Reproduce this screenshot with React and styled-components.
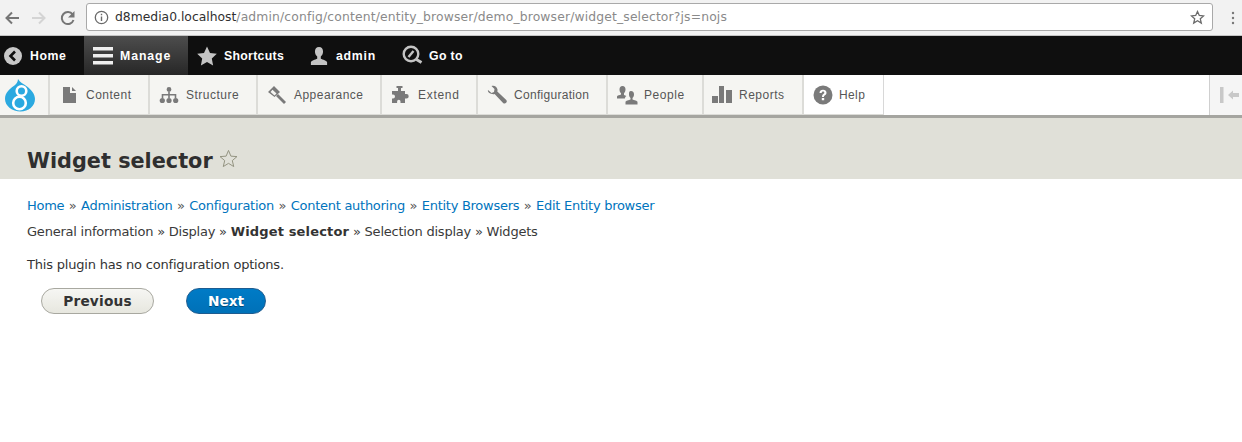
import React from "react";
import styled, { createGlobalStyle } from "styled-components";

const Global = createGlobalStyle`
  html, body { margin: 0; padding: 0; background: #fff; }
  body { font-family: "DejaVu Sans", sans-serif; color: #333; width: 1242px; height: 442px; overflow: hidden; }
`;

const Browser = styled.div`
  height: 36px; box-sizing: border-box; background: #f2f2f2; border-bottom: 1px solid #c4c4c4;
  display: flex; align-items: flex-start;
`;
const NavIcons = styled.div`
  width: 86px; height: 35px; flex: none; display: flex; align-items: center; padding-left: 2px; gap: 10px; box-sizing: border-box;
`;
const Address = styled.div`
  margin-top: 3px; width: 1127px; height: 28px; box-sizing: border-box; flex: none;
  background: #fff; border: 1px solid #a9a9a9; border-radius: 3px;
  display: flex; align-items: center; padding: 0 7px 0 7px;
  font-size: 12.35px; white-space: nowrap;
`;
const Host = styled.span` color: #303030; margin-left: 6px; `;
const UrlPath = styled.span` color: #8a8a8a; flex: 1; letter-spacing: .15px; `;
const Kebab = styled.div`
  flex: 1; height: 35px; display: flex; align-items: center; justify-content: center; padding-left: 10px;
`;

const TopBar = styled.div`
  height: 39px; background: #0f0f0f; display: flex; align-items: stretch; padding-left: 4px;
`;
const TopItem = styled.div`
  display: flex; align-items: center; box-sizing: border-box;
  width: ${p => p.$w}px; padding-left: ${p => p.$pl || 0}px; gap: ${p => p.$gap || 8}px;
  color: #fff; font: bold 12.3px "Liberation Sans", sans-serif; letter-spacing: ${p => p.$ls}px;
  background: ${p => p.$active ? "linear-gradient(#4d4d4d, #272727)" : "none"};
`;

const Tray = styled.div`
  height: 43px; box-sizing: border-box; background: #fff; display: flex; align-items: stretch;
  border-bottom: 3px solid #a5a5a0;
`;
const LogoCell = styled.div`
  width: 50px; flex: none; box-sizing: border-box; background: #f5f5f2; border-right: 2px solid #dcdcd8;
  display: flex; align-items: center; padding-left: 5px;
`;
const Tab = styled.div`
  width: ${p => p.$w}px; flex: none; box-sizing: border-box;
  background: ${p => p.$white ? "#fff" : "#f5f5f2"};
  border-right: ${p => p.$white ? "1px solid #d8d8d8" : "2px solid #dcdcd8"};
  border-bottom: 1px solid #dcdcd8;
  display: flex; align-items: center; padding-left: ${p => p.$pl}px; gap: ${p => p.$gap}px;
  font: 12px "Liberation Sans", sans-serif; letter-spacing: ${p => p.$ls}px; color: #565656;
`;
const Spacer = styled.div` flex: 1; `;
const Toggle = styled.div`
  width: 33px; flex: none; box-sizing: border-box; background: #f5f5f5; border-left: 1px solid #cfcfcf;
  display: flex; align-items: center; padding-left: 10px;
`;

const Header = styled.div`
  height: 61px; background: #e0e0d8; box-sizing: border-box; padding: 29px 0 0 27px;
  display: flex; align-items: flex-start; gap: 6px;
`;
const Title = styled.h1`
  margin: 0; font: bold 20.8px/28px "DejaVu Sans", sans-serif; color: #2f2f2f;
`;
const StarWrap = styled.div` padding-top: 2px; `;
const Main = styled.div` padding: 18px 0 0 27px; font-size: 13px; `;
const Crumbs = styled.div` line-height: 17px; color: #555; white-space: nowrap; letter-spacing: -.27px; `;
const Sep = styled.span` margin: 0 .7px; `;
const A = styled.a` color: #0074bd; text-decoration: none; `;
const Steps = styled.div` margin-top: 9px; line-height: 17px; color: #3a3a3a; white-space: nowrap; letter-spacing: -.22px; b { color: #333; letter-spacing: .15px; } `;
const Note = styled.div` margin-top: 16px; line-height: 17px; color: #333; letter-spacing: -.195px; `;
const Buttons = styled.div` display: flex; margin: 15px 0 0 14px; gap: 32px; `;
const Button = styled.div`
  height: 26px; box-sizing: border-box; width: ${p => p.$w}px; border-radius: 13px;
  display: flex; align-items: center; justify-content: center;
  font: bold 13.7px "DejaVu Sans", sans-serif;
  letter-spacing: ${p => p.$primary ? 0 : .2}px;
  border: 1px solid ${p => p.$primary ? "#1e5c90" : "#a8a8a0"};
  color: ${p => p.$primary ? "#fff" : "#333"};
  background: ${p => p.$primary ? "linear-gradient(#007bc6, #0071b8)" : "linear-gradient(#f6f6f3, #e7e7df)"};
  text-shadow: ${p => p.$primary ? "0 1px 0 rgba(0,0,0,.4)" : "none"};
`;

const Ic = ({ s = 20, w, h, vb = "0 0 20 20", children }) => (
  <svg width={w || s} height={h || s} viewBox={vb} style={{ flex: "none", display: "block" }}>{children}</svg>
);
const G = "#7a7a7a";

const tabs = [
  { l: "Content", w: 100, pl: 12, gap: 8, ls: .5, i: <Ic w={16} h={18} vb="0 0 16 18"><path d="M1 1h7v6h6v10H1z M10 1l4 4h-4z" fill={G}/></Ic> },
  { l: "Structure", w: 108, pl: 9, gap: 7, ls: .5, i: <Ic w={20} h={18} vb="0 0 20 18"><path d="M10 1a2.4 2.4 0 1 1 0 4.800a2.400 2.400 0 1 1 0-4.800z M9.200 5h1.600v3h6.500v4h-1.600V9.600h-4.900V12H9.200V9.600H4.300V12H2.700V8h6.500z" fill={G}/><circle cx="3.300" cy="14.500" r="2.600" fill={G}/><circle cx="10" cy="14.500" r="2.600" fill={G}/><circle cx="16.700" cy="14.500" r="2.600" fill={G}/></Ic> },
  { l: "Appearance", w: 124, pl: 9, gap: 7, ls: .47, i: <Ic w={20} h={20} vb="0 0 20 20"><path d="M7 1l6 6-5.500 5L1 7z M5.500 4.800L3.500 7l4 3.500 2-2z" fill={G} fillRule="evenodd"/><path d="M11 9l8 8-2 2-8-8z" fill={G}/></Ic> },
  { l: "Extend", w: 96, pl: 9, gap: 7, ls: .7, i: <Ic w={20} h={18} vb="0 0 20 18"><path d="M5.500 0h6v2H10v3h4v3h1.500a2.200 2.200 0 1 1 0 4.400H14V17h-4.500v-1.500a1.700 1.700 0 0 0-3.400 0V17H1v-4.500h1a2 2 0 1 0 0-4H1V5h6V2H5.500z" fill={G}/></Ic> },
  { l: "Configuration", w: 130, pl: 9, gap: 7, ls: .3, i: <Ic w={20} h={20} vb="0 0 20 20"><path d="M1 5l3.500 3L7 7l.5-3L4.500 1C7 0 10 1.500 10.500 4.500c.1.800 0 1.400-.2 2l9 8.500c.8 1 .6 2-.2 2.800s-2 1-3 .1l-8.500-9c-.8.300-1.600.4-2.500.2C2 8 .5 7 1 5z" fill={G}/></Ic> },
  { l: "People", w: 96, pl: 9, gap: 6, ls: .55, i: <Ic w={21} h={20} vb="0 0 21 20"><path d="M5.500 1c2 0 3 1.500 3 3.500 0 1.500-.7 3-1.500 3.700V10c.8.500 1.700.7 2.400 1-1 .8-1.500 1.500-1.500 2.500H0v-2c0-1 3-1.500 4-2V8.200C3 7.500 2.500 6 2.500 4.500 2.500 2.500 3.500 1 5.500 1z" fill={G}/><path d="M14 6c2 0 3 1.500 3 3.500 0 1.500-.6 2.700-1.500 3.500v1.500c1.500.7 5 1.200 5 2.500v2.500H8.500V17c0-1.300 3.500-1.800 5-2.500V13c-.9-.8-1.500-2-1.500-3.500C12 7.500 12 6 14 6z" fill={G}/></Ic> },
  { l: "Reports", w: 100, pl: 8, gap: 7, ls: .5, i: <Ic w={20} h={20} vb="0 0 20 20"><path d="M0 11h6v7H0z M7 1h5v17H7z M14 5h6v13h-6z" fill={G}/></Ic> },
];

const Crumb = ["Home", "Administration", "Configuration", "Content authoring", "Entity Browsers", "Edit Entity browser"];

export default function App() {
  return (
    <>
      <Global />
      <Browser>
        <NavIcons>
          <Ic s={18} vb="0 0 18 18"><path d="M17 9H5M10 3.500L4.500 9l5.500 5.500" fill="none" stroke="#767676" strokeWidth="2"/></Ic>
          <Ic s={18} vb="0 0 18 18"><path d="M2 9h12.500M9 3.500L14.500 9 9 14.500" fill="none" stroke="#d4d4d4" strokeWidth="2"/></Ic>
          <Ic s={18} vb="0 0 18 18"><path d="M15.500 11a6 6 0 1 1-.8-5.400" fill="none" stroke="#767676" strokeWidth="2"/><path d="M16.500 2v6.500h-6.500z" fill="#767676"/></Ic>
        </NavIcons>
        <Address>
          <Ic s={15} vb="0 0 15 15"><circle cx="7.500" cy="7.500" r="6.200" fill="none" stroke="#6a6a6a" strokeWidth="1.300"/><path d="M6.800 6.500h1.400v4.500H6.800z M6.800 3.800h1.400v1.400H6.800z" fill="#6a6a6a"/></Ic>
          <Host>d8media0.localhost</Host>
          <UrlPath>/admin/config/content/entity_browser/demo_browser/widget_selector?js=nojs</UrlPath>
          <Ic s={15} vb="0 0 15 15"><path d="M7.500 1.500l1.800 4 4.300.4-3.300 2.900 1 4.300-3.800-2.300-3.800 2.300 1-4.300L1.400 5.900l4.300-.4z" fill="none" stroke="#6a6a6a" strokeWidth="1.300"/></Ic>
        </Address>
        <Kebab>
          <Ic w={4} h={14} vb="0 0 4 14"><circle cx="2" cy="2" r="1.200" fill="#777"/><circle cx="2" cy="7" r="1.200" fill="#777"/><circle cx="2" cy="12" r="1.200" fill="#777"/></Ic>
        </Kebab>
      </Browser>

      <TopBar>
        <TopItem $w={80} $gap={8} $ls={.55}>
          <Ic s={18} vb="0 0 18 18"><circle cx="9" cy="9" r="9" fill="#c8c8c8"/><path d="M11 4.500L6.500 9l4.500 4.500" fill="none" stroke="#0f0f0f" strokeWidth="2.600"/></Ic>
          Home
        </TopItem>
        <TopItem $w={104} $active $pl={9} $gap={7} $ls={.9}>
          <Ic w={20} h={19} vb="0 0 20 19"><path d="M0 1h20v3.400H0z M0 8h20v3.400H0z M0 15h20v3.400H0z" fill="#eee"/></Ic>
          Manage
        </TopItem>
        <TopItem $w={113} $pl={9} $gap={7} $ls={.3}>
          <Ic s={20} vb="0 0 20 20"><path d="M10 .5l3 6.500 6.800.8-5 4.700 1.300 6.900-6.100-3.400-6.100 3.400 1.300-6.900-5-4.700L7 7z" fill="#c4c4c4"/></Ic>
          Shortcuts
        </TopItem>
        <TopItem $w={90} $pl={9} $gap={8} $ls={.75}>
          <Ic w={18} h={20} vb="0 0 20 20"><path d="M10 0c3 0 4.500 2.300 4.500 5 0 2.300-1 4.500-2.500 5.500V13c2 1 7 2 7 4v3H1v-3c0-2 5-3 7-4v-2.500C6.500 9.500 5.500 7.300 5.500 5 5.500 2.300 7 0 10 0z" fill="#c4c4c4"/></Ic>
          admin
        </TopItem>
        <TopItem $w={100} $pl={11} $gap={6} $ls={.35}>
          <Ic s={21} vb="0 0 21 21"><circle cx="9" cy="9" r="7.300" fill="none" stroke="#c4c4c4" strokeWidth="2.400"/><path d="M6.500 12L11.500 6" stroke="#c4c4c4" strokeWidth="2.400"/><path d="M14.500 14.500l5 3" stroke="#c4c4c4" strokeWidth="3"/></Ic>
          Go to
        </TopItem>
      </TopBar>

      <Tray>
        <LogoCell>
          <Ic w={31} h={34} vb="0 0 31 34">
            <path d="M13 1c2 3.500 5 4.500 9 7.500 4.500 3.500 8 7.500 8 12.500 0 7-6.500 12.500-14.500 12.500S0 28 0 21c0-6 4.500-10 8-12.500C11 6.500 13 4.500 13 1z" fill="#2ba9e0"/>
            <circle cx="16.500" cy="13" r="4.800" fill="#2ba9e0" stroke="#fff" strokeWidth="2.600"/>
            <circle cx="14.500" cy="25" r="6.300" fill="#2ba9e0" stroke="#fff" strokeWidth="2.600"/>
          </Ic>
        </LogoCell>
        {tabs.map(t => (
          <Tab key={t.l} $w={t.w} $pl={t.pl} $gap={t.gap} $ls={t.ls}>{t.i}{t.l}</Tab>
        ))}
        <Tab $w={80} $pl={9} $gap={6} $ls={.38} $white>
          <Ic s={20} vb="0 0 20 20"><circle cx="10" cy="10" r="9.500" fill={G}/><path d="M6.500 8c0-2 1.500-3.200 3.500-3.200S13.500 6 13.500 7.800c0 2.400-2.500 2.400-2.500 4.200H9c0-3 2.300-3 2.300-4.200 0-.7-.5-1.200-1.300-1.200S8.700 7.200 8.700 8z M8.800 13h2.400v2.300H8.800z" fill="#fff"/></Ic>
          Help
        </Tab>
        <Spacer />
        <Toggle>
          <Ic w={20} h={16} vb="0 0 20 16"><path d="M0 0h3.500v16H0z M8 8l5-4.500V6h6v4h-6v2.500z" fill="#c8c8c8"/></Ic>
        </Toggle>
      </Tray>

      <Header>
        <Title>Widget selector</Title>
        <StarWrap>
          <Ic s={19} vb="0 0 20 20"><path d="M10 1.500l2.500 6 6.400.5-4.900 4.200 1.500 6.300-5.500-3.400-5.500 3.400L6 12.200 1.100 8l6.400-.5z" fill="none" stroke="#8f8f7c" strokeWidth="1"/></Ic>
        </StarWrap>
      </Header>

      <Main>
        <Crumbs>
          {Crumb.map((c, i) => (
            <React.Fragment key={c}>
              {i > 0 && <Sep> » </Sep>}
              <A>{c}</A>
            </React.Fragment>
          ))}
        </Crumbs>
        <Steps>General information » Display » <b>Widget selector</b> » Selection display » Widgets</Steps>
        <Note>This plugin has no configuration options.</Note>
        <Buttons>
          <Button $w={113}>Previous</Button>
          <Button $w={80} $primary>Next</Button>
        </Buttons>
      </Main>
    </>
  );
}
